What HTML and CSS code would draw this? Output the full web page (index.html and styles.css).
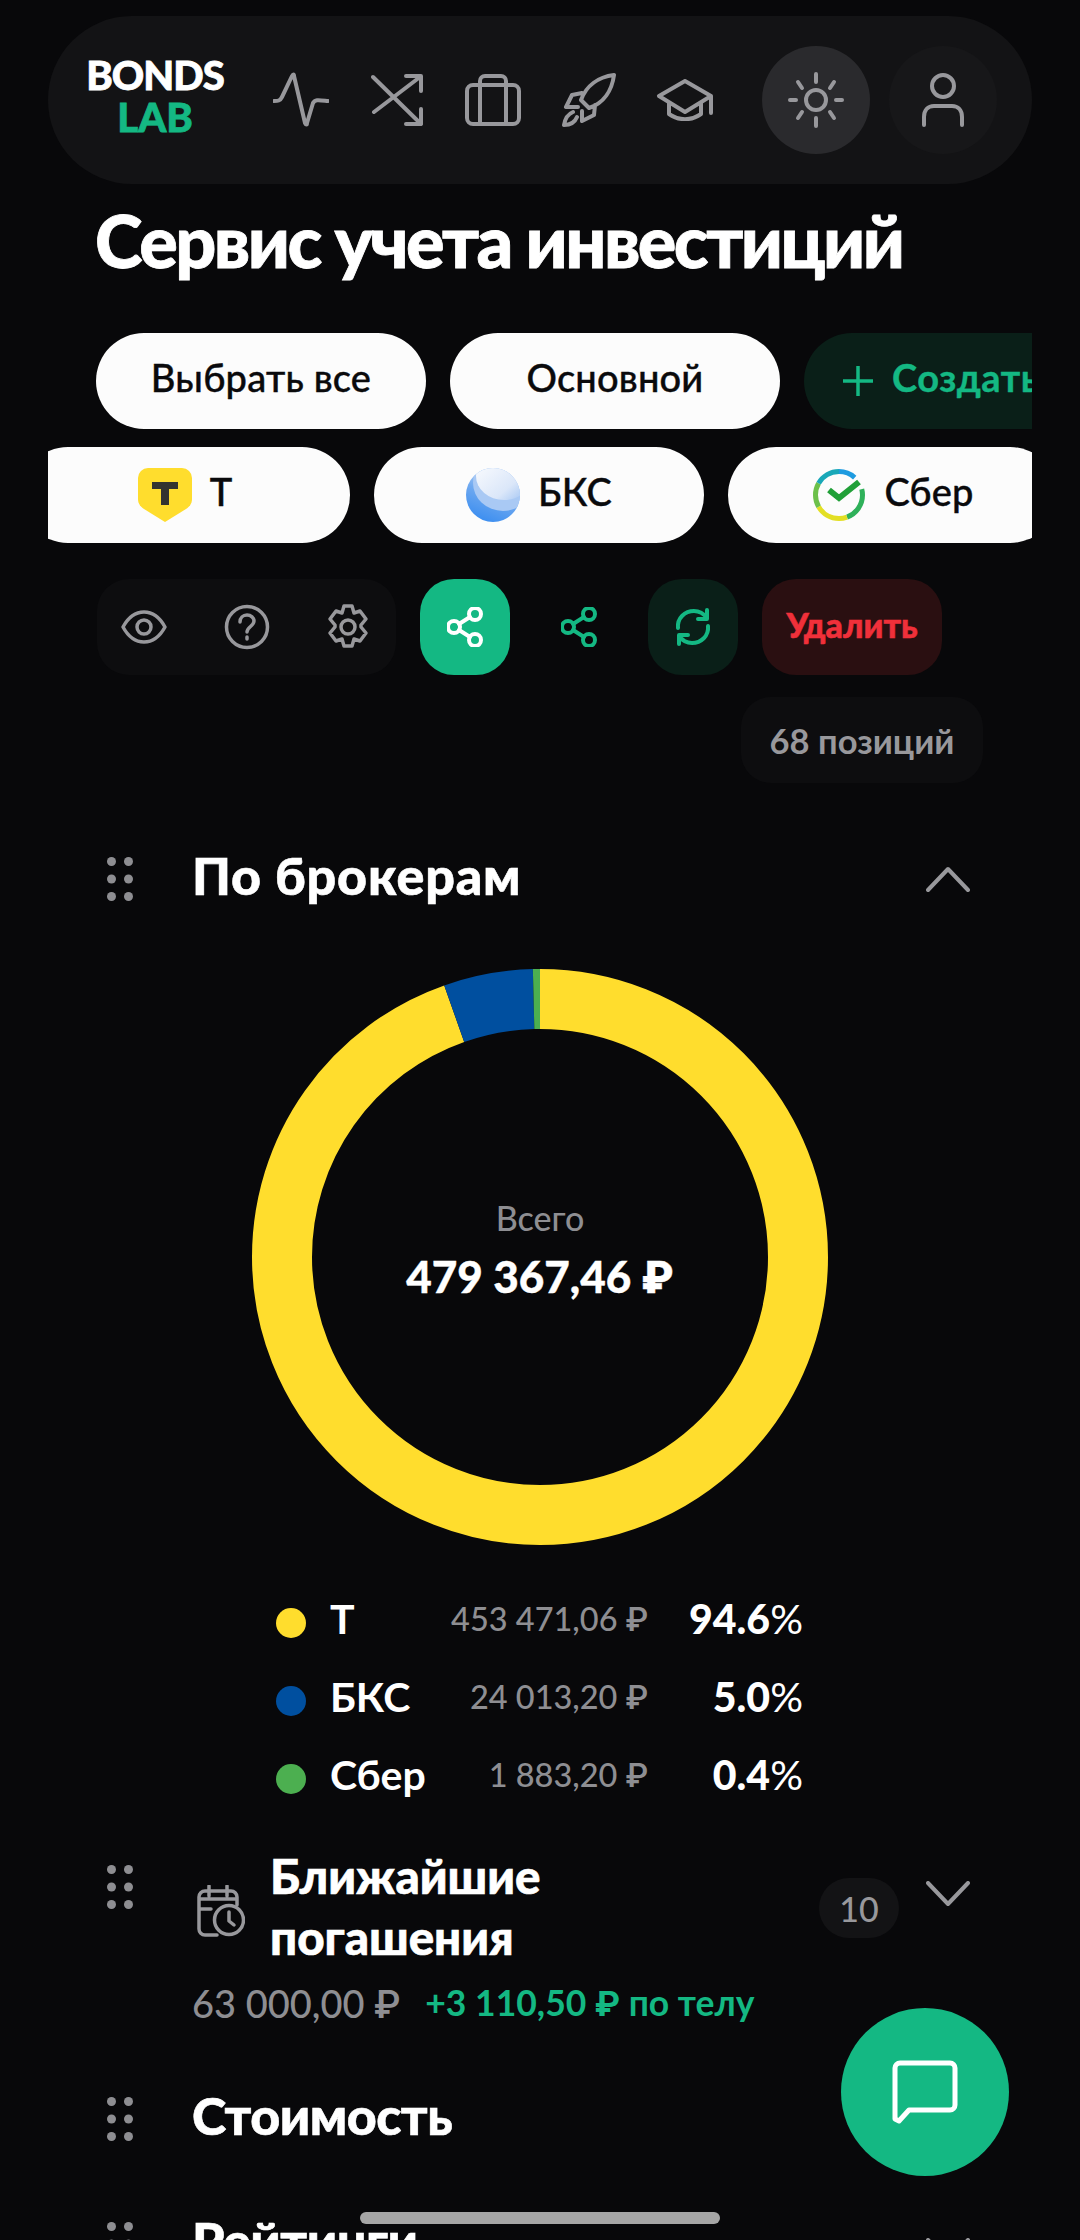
FILE: index.html
```html
<!DOCTYPE html>
<html lang="ru">
<head>
  <meta charset="UTF-8">
  <title>Bonds Lab</title>
  <link rel="stylesheet" href="styles.css">
</head>
<body>

<svg class="sprite" width="0" height="0">
  <symbol id="grip" viewBox="0 0 26 44">
    <circle cx="4.500" cy="4.500" r="4.500"/><circle cx="21.500" cy="4.500" r="4.500"/>
    <circle cx="4.500" cy="22" r="4.500"/><circle cx="21.500" cy="22" r="4.500"/>
    <circle cx="4.500" cy="39.500" r="4.500"/><circle cx="21.500" cy="39.500" r="4.500"/>
  </symbol>
  <symbol id="share" viewBox="0 0 36 40">
    <circle cx="28" cy="7" r="6"/><circle cx="7" cy="20" r="6"/><circle cx="28" cy="33" r="6"/>
    <path d="M12 17l11-7M12 23l11 7"/>
  </symbol>
</svg>

<div class="page">

  <header class="topbar">
    <div class="logo">
      <span class="logo-top">BONDS</span>
      <span class="logo-bottom">LAB</span>
    </div>
    <nav class="nav">
      <span class="nav-item">
        <svg class="ico" width="56" height="56" viewBox="0 0 56 56"><path d="M1 29c4 0 6 0 8-4l10-21c1-2 2-2 2 0l11 47c1 2 2 2 2 0l6-20c2-4 6-3 15-2"/></svg>
      </span>
      <span class="nav-item">
        <svg class="ico" width="52" height="52" viewBox="0 0 52 52"><path d="M2 3l48 47M3 38L49 3M35 2h15v15M50 35v15H35"/></svg>
      </span>
      <span class="nav-item">
        <svg class="ico" width="56" height="52" viewBox="0 0 56 52"><rect x="2" y="11" width="52" height="39" rx="6"/><path d="M15 11V7a5 5 0 0 1 5-5h16a5 5 0 0 1 5 5v4M15 11v39M41 11v39"/></svg>
      </span>
      <span class="nav-item">
        <svg class="ico" width="54" height="54" viewBox="0 0 54 54"><path d="M52 2C36 4 24 13 19 27l8 8C42 30 50 17 52 2zM20 20l-10 2-6 12h12M33 32l-1 10-12 6v-10M11 39c-5 2-8 7-9 13 6 0 11-3 13-8"/></svg>
      </span>
      <span class="nav-item">
        <svg class="ico" width="58" height="42" viewBox="0 0 58 42"><path d="M29 2L3 17l26 16 26-16zM13 24v11c10 7 22 7 32 0V24M55 17v17"/></svg>
      </span>
    </nav>
    <button class="round-btn round-btn-active">
      <svg class="ico" width="58" height="58" viewBox="0 0 58 58"><circle cx="29" cy="29" r="10"/><path d="M29 3v8M29 47v8M3 29h6M49 29h6M11 11l4 6M43 41l4 6M47 11l-4 6M15 41l-4 6"/></svg>
    </button>
    <button class="round-btn">
      <svg class="ico" width="44" height="54" viewBox="0 0 44 54"><ellipse cx="22" cy="13" rx="11" ry="11"/><path d="M3 52v-8c0-7 4-11 10-11h18c6 0 10 4 10 11v8"/></svg>
    </button>
  </header>

  <h1 class="page-title">Сервис учета инвестиций</h1>

  <div class="chip-row chip-row-first">
    <div class="chip"><span>Выбрать все</span></div>
    <div class="chip"><span>Основной</span></div>
    <div class="chip chip-create">
      <svg width="32" height="32" viewBox="0 0 32 32"><path d="M16 1v30M1 16h30"/></svg>
      <span>Создать</span>
    </div>
  </div>

  <div class="chip-row chip-row-second">
    <div class="chip">
      <svg width="54" height="54" viewBox="0 0 54 54">
        <path class="tbank-shield" d="M10 0h34a10 10 0 0 1 10 10v21c0 5-3 8-6 10L27 54 6 41c-3-2-6-5-6-10V10A10 10 0 0 1 10 0z"/>
        <rect class="tbank-mark" x="14" y="14" width="26" height="7"/>
        <rect class="tbank-mark" x="23" y="14" width="8" height="23"/>
      </svg>
      <span>Т</span>
    </div>
    <div class="chip">
      <svg width="54" height="54" viewBox="0 0 54 54">
        <defs>
          <linearGradient id="bcsBase" x1="0.7" y1="0" x2="0.3" y2="1">
            <stop offset="0" stop-color="#cfe0f8"/>
            <stop offset="0.5" stop-color="#6fa9f0"/>
            <stop offset="1" stop-color="#3a8df0"/>
          </linearGradient>
          <linearGradient id="bcsCap" x1="0.1" y1="0.1" x2="0.9" y2="0.9">
            <stop offset="0" stop-color="#fbfcfe"/>
            <stop offset="0.7" stop-color="#dbe7f9"/>
            <stop offset="1" stop-color="#a9c9f4"/>
          </linearGradient>
          <clipPath id="bcsClip"><circle cx="27" cy="27" r="27"/></clipPath>
        </defs>
        <circle cx="27" cy="27" r="27" fill="url(#bcsBase)"/>
        <ellipse cx="37" cy="15" rx="30" ry="28" fill="#a9c9f4" clip-path="url(#bcsClip)"/>
        <ellipse cx="38" cy="8" rx="28" ry="24" fill="url(#bcsCap)" clip-path="url(#bcsClip)"/>
      </svg>
      <span>БКС</span>
    </div>
    <div class="chip">
      <svg class="sber-logo" width="54" height="54" viewBox="0 0 54 54">
        <g transform="rotate(-90 27 27)">
          <circle cx="27" cy="27" r="23.500" pathLength="360" stroke="#1e9be0" stroke-dasharray="42 318"/>
          <circle cx="27" cy="27" r="23.500" pathLength="360" stroke="#2fb15a" stroke-dasharray="85 275" stroke-dashoffset="-75"/>
          <circle cx="27" cy="27" r="23.500" pathLength="360" stroke="#e3df24" stroke-dasharray="80 280" stroke-dashoffset="-160"/>
          <circle cx="27" cy="27" r="23.500" pathLength="360" stroke="#6cc04a" stroke-dasharray="60 300" stroke-dashoffset="-240"/>
          <circle cx="27" cy="27" r="23.500" pathLength="360" stroke="#19a8b8" stroke-dasharray="60 300" stroke-dashoffset="-300"/>
        </g>
        <path class="sber-tick" d="M17 22l10 8 20-16"/>
      </svg>
      <span>Сбер</span>
    </div>
  </div>

  <div class="toolbar">
    <div class="tool-group">
      <svg class="ico" width="46" height="34" viewBox="0 0 46 34"><path d="M2 17C8 6 15 2 23 2s15 4 21 15c-6 11-13 15-21 15S8 28 2 17z"/><circle cx="23" cy="17" r="7"/></svg>
      <svg class="ico" width="46" height="46" viewBox="0 0 46 46"><circle cx="23" cy="23" r="20.500"/><path d="M16 18c0-4 3-7 7-7s7 3 7 6c0 5-7 6-7 11M23 33v2"/></svg>
      <svg class="ico" width="42" height="46" viewBox="0 0 42 46"><path d="M17 2h8l2 7 6-2 6 8-5 6v2l5 6-6 8-6-2-2 7h-8l-2-7-6 2-6-8 5-6v-2l-5-6 6-8 6 2z"/><circle cx="21" cy="23" r="7"/></svg>
    </div>
    <button class="square-btn square-btn-green">
      <svg class="share-white" width="36" height="40"><use href="#share"/></svg>
    </button>
    <button class="square-btn">
      <svg class="share-green" width="36" height="40"><use href="#share"/></svg>
    </button>
    <button class="square-btn square-btn-dark">
      <svg class="share-green" width="38" height="38" viewBox="0 0 38 38"><path d="M4 20C3 10 11 3 20 3c6 0 10 3 13 7M34 18c1 10-7 17-16 17-6 0-10-3-13-7M33 2v9h-9M5 36v-9h9"/></svg>
    </button>
    <button class="delete-btn">Удалить</button>
  </div>

  <div class="count-row">
    <span class="count-pill">68 позиций</span>
  </div>

  <section class="block-head block-brokers">
    <svg class="grip" width="26" height="44"><use href="#grip"/></svg>
    <h2 class="block-title title-brokers">По брокерам</h2>
    <svg class="ico chevron" width="44" height="26" viewBox="0 0 44 26"><path d="M2 24L22 3l20 21"/></svg>
  </section>

  <div class="donut">
    <svg width="578" height="578" viewBox="0 0 578 578">
      <g class="donut-ring" transform="rotate(-90 289 289)">
        <circle cx="289" cy="289" r="258" pathLength="100" stroke="#ffdd2d" stroke-dasharray="94.6 5.4"/>
        <circle cx="289" cy="289" r="258" pathLength="100" stroke="#004f9f" stroke-dasharray="5 95" stroke-dashoffset="-94.6"/>
        <circle cx="289" cy="289" r="258" pathLength="100" stroke="#4caf50" stroke-dasharray="0.4 99.6" stroke-dashoffset="-99.6"/>
      </g>
    </svg>
    <div class="donut-center">
      <span class="donut-label">Всего</span>
      <span class="donut-value">479 367,46 ₽</span>
    </div>
  </div>

  <ul class="legend">
    <li class="legend-row">
      <i class="legend-dot dot-yellow"></i>
      <span class="legend-name">Т</span>
      <span class="legend-sum">453 471,06 ₽</span>
      <span class="legend-pct">94.6<small>%</small></span>
    </li>
    <li class="legend-row">
      <i class="legend-dot dot-blue"></i>
      <span class="legend-name">БКС</span>
      <span class="legend-sum">24 013,20 ₽</span>
      <span class="legend-pct">5.0<small>%</small></span>
    </li>
    <li class="legend-row">
      <i class="legend-dot dot-green"></i>
      <span class="legend-name">Сбер</span>
      <span class="legend-sum">1 883,20 ₽</span>
      <span class="legend-pct">0.4<small>%</small></span>
    </li>
  </ul>

  <section class="block-head block-redeem">
    <svg class="grip" width="26" height="44"><use href="#grip"/></svg>
    <svg class="ico redeem-ico" width="48" height="52" viewBox="0 0 48 52"><path d="M12 1v10M30 1v10M2 14h38M20 50H8a6 6 0 0 1-6-6V12a6 6 0 0 1 6-6h26a6 6 0 0 1 6 6v8M2 24h12"/><circle cx="32" cy="35" r="14.500"/><path d="M32 27v9l5 4"/></svg>
    <h2 class="block-title redeem-title">Ближайшие<br>погашения</h2>
    <span class="redeem-badge">10</span>
    <svg class="ico chevron redeem-chevron" width="44" height="26" viewBox="0 0 44 26"><path d="M2 2l20 21L42 2"/></svg>
  </section>
  <div class="redeem-sums">
    <span class="sum-gray">63 000,00 ₽</span>
    <span class="sum-green">+3 110,50 ₽ по телу</span>
  </div>

  <section class="block-head block-cost">
    <svg class="grip" width="26" height="44"><use href="#grip"/></svg>
    <h2 class="block-title title-tight">Стоимость</h2>
  </section>

  <section class="block-head block-rating">
    <svg class="grip" width="26" height="44"><use href="#grip"/></svg>
    <h2 class="block-title title-tight">Рейтинги</h2>
    <svg class="ico chevron rating-chevron" width="44" height="26" viewBox="0 0 44 26"><path d="M2 2l20 21L42 2"/></svg>
  </section>

  <button class="chat-fab">
    <svg width="66" height="64" viewBox="0 0 66 64"><path d="M3 8a5 5 0 0 1 5-5h50a5 5 0 0 1 5 5v37a5 5 0 0 1-5 5H17L7 61l-4-2z"/></svg>
  </button>
  <div class="home-bar"></div>

</div>

</body>
</html>
```

FILE: styles.css
```css
* {
  box-sizing: border-box;
}

html, body {
  margin: 0;
  padding: 0;
  background: #08080a;
  font-family: 'Lato', 'Roboto', 'Noto Sans', sans-serif;
  color: #fff;
}

button {
  border: 0;
  padding: 0;
  font: inherit;
  color: inherit;
}

.sprite {
  display: block;
  height: 0;
}

.page {
  position: relative;
  width: 1080px;
  height: 2240px;
  overflow: hidden;
  padding-top: 16px;
}

.ico {
  fill: none;
  stroke: #98989c;
  stroke-width: 4;
  stroke-linecap: round;
  stroke-linejoin: round;
  flex-shrink: 0;
}

/* top bar */
.topbar {
  display: flex;
  align-items: center;
  height: 168px;
  margin: 0 48px;
  padding-left: 37px;
  border-radius: 84px;
  background: #131315;
}

.logo {
  display: flex;
  flex-direction: column;
  align-items: center;
  width: 140px;
  padding-bottom: 8px;
  font-weight: 900;
  font-size: 40px;
  line-height: 42px;
  -webkit-text-stroke: 0.8px currentColor;
}

.logo-top {
  letter-spacing: -1px;
}

.logo-bottom {
  color: #14b883;
}

.nav {
  display: flex;
  margin-left: 28px;
}

.nav-item {
  display: flex;
  justify-content: center;
  align-items: center;
  width: 96px;
}

.round-btn {
  display: flex;
  justify-content: center;
  align-items: center;
  width: 108px;
  height: 108px;
  margin-left: 19px;
  border-radius: 50%;
  background: #171719;
}

.round-btn-active {
  margin-left: 29px;
  background: #2a2a2d;
}

.page-title {
  margin: 16px 0 0 95px;
  font-size: 72px;
  line-height: 80px;
  font-weight: 900;
  letter-spacing: -2.500px;
  -webkit-text-stroke: 0.8px currentColor;
}

/* chips */
.chip-row {
  display: flex;
  gap: 24px;
  margin: 0 48px;
  overflow: hidden;
}

.chip-row-first {
  margin-top: 53px;
  padding-left: 48px;
}

.chip-row-second {
  margin-top: 18px;
  padding-left: 0;
}

.chip-row-second .chip:first-child {
  margin-left: -28px;
}

.chip {
  display: flex;
  flex-shrink: 0;
  justify-content: center;
  align-items: center;
  gap: 18px;
  width: 330px;
  height: 96px;
  border-radius: 48px;
  background: #fcfcfc;
  color: #0a0a0c;
  font-size: 38px;
  font-weight: 500;
  letter-spacing: 0.2px;
  -webkit-text-stroke: 0.4px currentColor;
}

.chip span {
  margin-bottom: 8px;
}

.chip-create {
  justify-content: flex-start;
  padding-left: 38px;
  background: #0a1f18;
  color: #14b883;
  font-weight: 700;
  letter-spacing: 0.5px;
}

.chip-create svg {
  fill: none;
  stroke: #14b883;
  stroke-width: 3.500;
  flex-shrink: 0;
}

.tbank-shield {
  fill: #ffdd2d;
}

.tbank-mark {
  fill: #333330;
}

.sber-logo circle {
  fill: none;
  stroke-width: 5;
}

.sber-tick {
  fill: none;
  stroke: #21a038;
  stroke-width: 6;
}

/* toolbar */
.toolbar {
  display: flex;
  gap: 24px;
  height: 96px;
  margin: 36px 0 0 97px;
}

.tool-group {
  display: flex;
  justify-content: space-between;
  align-items: center;
  width: 299px;
  padding: 0 27px 0 24px;
  border-radius: 32px;
  background: #0d0d0f;
}

.tool-group .ico {
  stroke-width: 3.500;
}

.square-btn {
  display: flex;
  justify-content: center;
  align-items: center;
  width: 90px;
  height: 96px;
  border-radius: 34px;
  background: transparent;
}

.square-btn-green {
  background: #14b883;
}

.square-btn-dark {
  background: #0a1f18;
}

.share-white, .share-green {
  fill: none;
  stroke-width: 4;
  stroke-linecap: round;
  stroke-linejoin: round;
}

.share-white {
  stroke: #fff;
}

.share-green {
  stroke: #14b883;
}

.delete-btn {
  width: 180px;
  height: 96px;
  padding-bottom: 6px;
  border-radius: 34px;
  background: #2a0f11;
  color: #f0303a;
  font-size: 34px;
  font-weight: 900;
  -webkit-text-stroke: 0.5px currentColor;
}

.count-row {
  display: flex;
  justify-content: flex-end;
  margin: 22px 97px 0 0;
}

.count-pill {
  display: flex;
  justify-content: center;
  align-items: center;
  width: 242px;
  height: 86px;
  border-radius: 30px;
  background: #0d0d0f;
  color: #98989c;
  font-size: 34.500px;
  font-weight: 700;
}

/* collapsible blocks */
.block-head {
  display: flex;
  align-items: center;
  height: 60px;
  margin-left: 107px;
  margin-right: 110px;
}

.grip {
  flex-shrink: 0;
  margin-top: 8px;
  fill: #8e8e92;
}

.chevron {
  margin-top: 8px;
}

.block-title {
  flex: 1;
  margin: 0 0 0 59px;
  font-size: 52px;
  line-height: 60px;
  font-weight: 900;
  -webkit-text-stroke: 0.6px currentColor;
}

.title-brokers {
  letter-spacing: 0.8px;
}

.title-tight {
  letter-spacing: -0.5px;
}

.block-brokers {
  margin-top: 62px;
}

/* donut */
.donut {
  display: grid;
  place-items: center;
  width: 578px;
  margin: 63px auto 0;
}

.donut > * {
  grid-area: 1 / 1;
}

.donut-ring circle {
  fill: none;
  stroke-width: 60;
}

.donut-center {
  display: flex;
  flex-direction: column;
  align-items: center;
  gap: 12px;
  padding-bottom: 14px;
}

.donut-label {
  color: #8e8e92;
  font-size: 34px;
  font-weight: 500;
}

.donut-value {
  font-size: 44px;
  font-weight: 900;
  -webkit-text-stroke: 0.4px currentColor;
}

/* legend */
.legend {
  width: 527px;
  margin: 38px 0 0 276px;
  padding: 0;
  list-style: none;
}

.legend-row {
  display: flex;
  align-items: center;
  height: 78px;
}

.legend-dot {
  width: 30px;
  height: 30px;
  margin-right: 24px;
  border-radius: 50%;
}

.dot-yellow {
  background: #ffdd2d;
}

.dot-blue {
  background: #004f9f;
}

.dot-green {
  background: #4caf50;
}

.legend-name {
  padding-bottom: 9px;
  font-size: 41px;
  font-weight: 700;
}

.legend-sum {
  flex: 1;
  margin-right: 39px;
  padding-bottom: 8px;
  text-align: right;
  color: #8e8e92;
  font-size: 32.500px;
  font-weight: 500;
}

.legend-pct {
  width: 116px;
  padding-bottom: 9px;
  text-align: right;
  font-size: 41px;
  font-weight: 900;
}

.legend-pct small {
  font-size: 41px;
  font-weight: 400;
}

/* redemptions */
.block-redeem {
  align-items: flex-start;
  height: 124px;
  margin-top: 29px;
}

.block-redeem .grip {
  margin-top: 18px;
}

.redeem-ico {
  margin: 38px 0 0 64px;
  stroke-width: 3.500;
}

.redeem-title {
  margin-top: -2px;
  margin-left: 25px;
  line-height: 61px;
  font-size: 47.500px;
}

.redeem-badge {
  display: flex;
  justify-content: center;
  align-items: center;
  width: 80px;
  height: 60px;
  margin-top: 31px;
  border-radius: 30px;
  background: #131315;
  color: #98989c;
  font-size: 34px;
  font-weight: 500;
}

.redeem-chevron {
  margin: 34px 0 0 27px;
}

.redeem-sums {
  display: flex;
  gap: 25px;
  height: 50px;
  margin: 7px 0 0 192px;
  align-items: center;
  font-size: 38px;
  font-weight: 500;
}

.sum-gray {
  color: #8e8e92;
}

.sum-green {
  color: #14b883;
  font-size: 35.500px;
  font-weight: 700;
}

.block-cost {
  margin-top: 57px;
}

.block-rating {
  margin-top: 65px;
}

.rating-chevron {
  margin-top: 22px;
}

/* overlays */
.chat-fab {
  position: absolute;
  left: 841px;
  top: 2008px;
  display: flex;
  justify-content: center;
  align-items: center;
  width: 168px;
  height: 168px;
  border-radius: 50%;
  background: #14b883;
}

.chat-fab svg {
  fill: none;
  stroke: #fff;
  stroke-width: 5;
  stroke-linejoin: round;
}

.home-bar {
  position: absolute;
  left: 360px;
  top: 2212px;
  width: 360px;
  height: 12px;
  border-radius: 6px;
  background: #a6a6a6;
}
```
